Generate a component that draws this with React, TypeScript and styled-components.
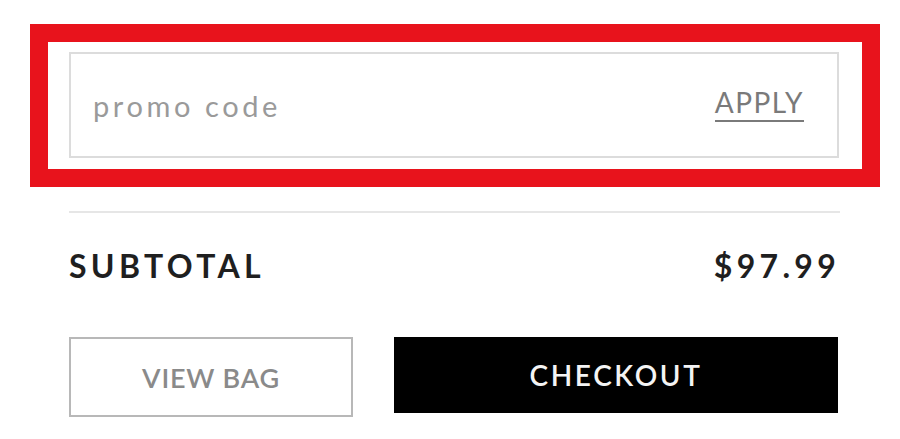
import styled, { createGlobalStyle } from 'styled-components';

const GlobalStyle = createGlobalStyle`
  body {
    margin: 0;
    background: #ffffff;
    font-family: Lato, "Liberation Sans", sans-serif;
  }
`;

const ScPanel = styled.div`
  width: 850px;
  padding: 24px 0 0 30px;
`;

const ScHighlight = styled.div`
  border: 18px solid #e8131c;
  padding: 10px 23px 11px 21px;
`;

const ScPromoField = styled.div`
  display: flex;
  align-items: center;
  justify-content: space-between;
  height: 102px;
  padding: 0 33px 0 22px;
  border: 2px solid #dcdcdc;
`;

const ScPromoInput = styled.input`
  flex: 1;
  border: 0;
  outline: none;
  background: transparent;
  font-family: inherit;
  font-size: 29px;
  letter-spacing: 3.6px;
  color: #555;
  padding: 0;

  &::placeholder {
    color: #9a9a9a;
  }
`;

const ScApply = styled.button`
  border: 0;
  background: none;
  padding: 0 0 4px;
  font-family: inherit;
  font-size: 28px;
  letter-spacing: 1.5px;
  color: #7a7a7a;
  border-bottom: 2px solid #7a7a7a;
  line-height: 1;
  cursor: pointer;
`;

const ScBody = styled.div`
  padding: 0 40px 0 39px;
`;

const ScDivider = styled.hr`
  margin: 24px 0 0;
  border: 0;
  height: 2px;
  background: #e6e6e6;
`;

const ScSummaryRow = styled.div`
  display: flex;
  justify-content: space-between;
  align-items: center;
  margin-top: 33px;
  font-size: 32px;
  line-height: 40px;
  font-weight: 700;
  letter-spacing: 4.3px;
  color: #1f1f1f;
`;

const ScActions = styled.div`
  display: flex;
  align-items: flex-start;
  gap: 41px;
  margin-top: 51px;
`;

const ScButton = styled.button<{ $primary?: boolean }>`
  display: flex;
  align-items: center;
  justify-content: center;
  box-sizing: border-box;
  width: ${(p) => (p.$primary ? '444px' : '284px')};
  height: ${(p) => (p.$primary ? '76px' : '80px')};
  border: 2px solid ${(p) => (p.$primary ? '#000' : '#b8b8b8')};
  background: ${(p) => (p.$primary ? '#000' : '#fff')};
  color: ${(p) => (p.$primary ? '#f4f4f4' : '#8a8a8a')};
  font-family: inherit;
  font-size: ${(p) => (p.$primary ? '28px' : '27px')};
  font-weight: 600;
  letter-spacing: ${(p) => (p.$primary ? '2.6px' : '0.8px')};
  cursor: pointer;
`;

export const App = () => {
  return (
    <ScPanel>
      <GlobalStyle />
      <ScHighlight>
        <ScPromoField>
          <ScPromoInput placeholder='promo code' />
          <ScApply>APPLY</ScApply>
        </ScPromoField>
      </ScHighlight>
      <ScBody>
        <ScDivider />
        <ScSummaryRow>
          <span>SUBTOTAL</span>
          <span>$97.99</span>
        </ScSummaryRow>
        <ScActions>
          <ScButton>VIEW BAG</ScButton>
          <ScButton $primary>CHECKOUT</ScButton>
        </ScActions>
      </ScBody>
    </ScPanel>
  );
};

export default App;
